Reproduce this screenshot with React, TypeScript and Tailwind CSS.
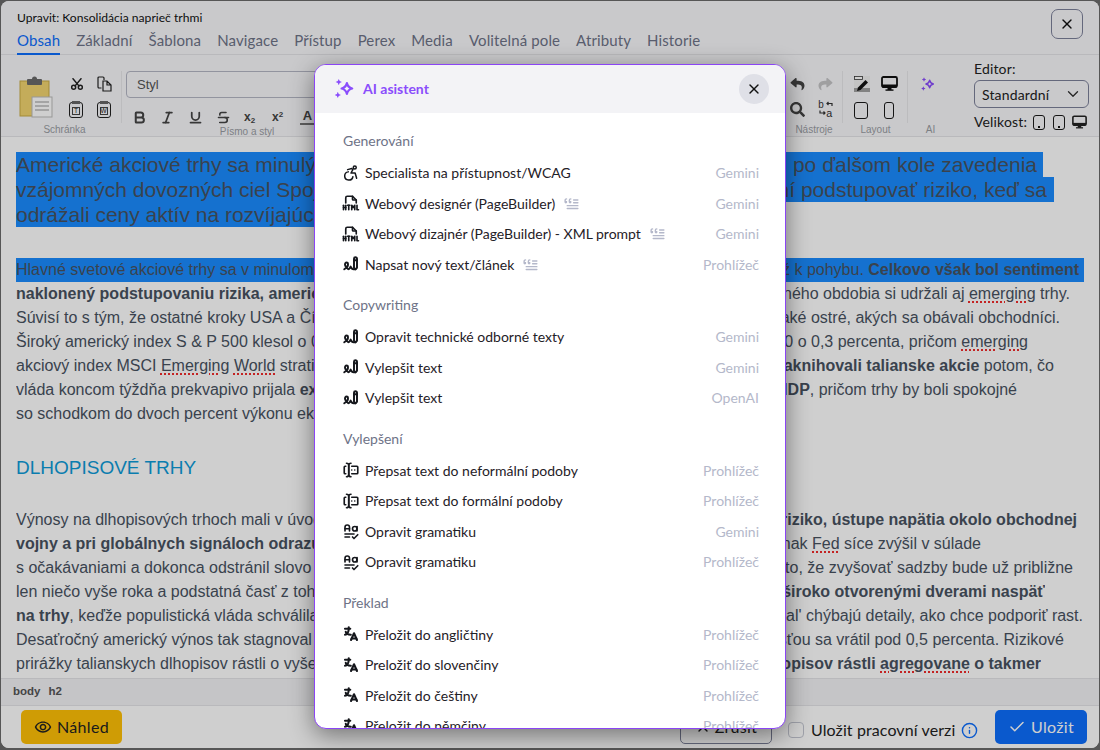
import React from "react";
import { MdOutlineRemoveRedEye } from "react-icons/md";
import { TbWritingSign, TbForms, TbTextGrammar, TbLanguage, TbBlockquote, TbFileTypeHtml, TbCut } from "react-icons/tb";
import { FaReply, FaShare, FaSearch } from "react-icons/fa";
import { Check, ChevronDown, X, Info, Bold, Italic, Underline, Strikethrough } from "lucide-react";

const Sparkles = ({ className }: { className?: string }) => (
  <svg viewBox="0 0 24 24" className={className} fill="none" stroke="currentColor">
    <path d="M14.5 6.5c.8 3.2 2 4.6 5.5 5.5-3.5.9-4.7 2.3-5.5 5.5-.8-3.2-2-4.6-5.5-5.5 3.5-.9 4.7-2.3 5.5-5.5z" strokeWidth="2.4" strokeLinejoin="round" />
    <path d="M6 2l1 2.3L9.3 5.3 7 6.3 6 8.6 5 6.3 2.7 5.3 5 4.3zM5 15.4l1 2.3 2.3 1-2.3 1L5 22l-1-2.3-2.3-1 2.3-1z" fill="currentColor" stroke="none" />
  </svg>
);

const Wheelchair = ({ className }: { className?: string }) => (
  <svg viewBox="0 0 24 24" className={className} fill="none" stroke="currentColor" strokeWidth="2" strokeLinecap="round" strokeLinejoin="round">
    <circle cx="17" cy="4.5" r="2" />
    <path d="M8.5 10.5A5.5 5.5 0 1 0 14.5 17" />
    <path d="M7.5 7.5 13 6l1.5 1.5-2.5 4.500h5.500l2 7" />
  </svg>
);

const Err = ({ children }: { children: React.ReactNode }) => (
  <span className="underline decoration-dotted decoration-[#f02c2c] decoration-[1.5px] underline-offset-2">{children}</span>
);

type Item = { icon: "a11y" | "html" | "sign" | "form" | "gram" | "lang"; label: string; src: string; quote?: boolean };

const groups: { title: string; items: Item[] }[] = [
  {
    title: "Generování",
    items: [
      { icon: "a11y", label: "Specialista na přístupnost/WCAG", src: "Gemini" },
      { icon: "html", label: "Webový designér (PageBuilder)", src: "Gemini", quote: true },
      { icon: "html", label: "Webový dizajnér (PageBuilder) - XML prompt", src: "Gemini", quote: true },
      { icon: "sign", label: "Napsat nový text/článek", src: "Prohlížeč", quote: true },
    ],
  },
  {
    title: "Copywriting",
    items: [
      { icon: "sign", label: "Opravit technické odborné texty", src: "Gemini" },
      { icon: "sign", label: "Vylepšit text", src: "Gemini" },
      { icon: "sign", label: "Vylepšit text", src: "OpenAI" },
    ],
  },
  {
    title: "Vylepšení",
    items: [
      { icon: "form", label: "Přepsat text do neformální podoby", src: "Prohlížeč" },
      { icon: "form", label: "Přepsat text do formální podoby", src: "Prohlížeč" },
      { icon: "gram", label: "Opravit gramatiku", src: "Gemini" },
      { icon: "gram", label: "Opravit gramatiku", src: "Prohlížeč" },
    ],
  },
  {
    title: "Překlad",
    items: [
      { icon: "lang", label: "Přeložit do angličtiny", src: "Prohlížeč" },
      { icon: "lang", label: "Preložiť do slovenčiny", src: "Prohlížeč" },
      { icon: "lang", label: "Přeložit do češtiny", src: "Prohlížeč" },
      { icon: "lang", label: "Přeložit do němčiny", src: "Prohlížeč" },
    ],
  },
];

const ItemIcon = ({ icon }: { icon: Item["icon"] }) => {
  const c = "w-[18px] h-[18px] text-[#15171c]";
  if (icon === "a11y") return <Wheelchair className={c} />;
  if (icon === "html") return <TbFileTypeHtml className={c} strokeWidth={2.2} />;
  if (icon === "sign") return <TbWritingSign className={c} strokeWidth={2.6} />;
  if (icon === "form") return <TbForms className={c} strokeWidth={2.2} />;
  if (icon === "gram") return <TbTextGrammar className={c} strokeWidth={2.2} />;
  return <TbLanguage className={c} strokeWidth={2.8} />;
};

const Line = ({ l, r, w }: { l: React.ReactNode; r: React.ReactNode; w: string }) => (
  <div className={"flex justify-between whitespace-nowrap h-6 leading-6 overflow-hidden " + w}>
    <span>{l}</span>
    <span>{r}</span>
  </div>
);

const tabs = ["Základní", "Šablona", "Navigace", "Přístup", "Perex", "Media", "Volitelná pole", "Atributy", "Historie"];

const PasteSmall = ({ t }: { t: string }) => (
  <span className="relative flex w-[14px] h-[16px] items-center justify-center rounded-[3px] border border-[#222]">
    <span className="absolute -top-[2px] left-[2px] w-[8px] h-[3px] bg-[#666]" />
    <span className="flex w-[8px] h-[8px] mt-[2px] items-center justify-center border border-[#444] text-[6.5px] leading-none text-[#222] font-['Liberation_Sans',sans-serif]">{t}</span>
  </span>
);

const Group = ({ w, label, border = true, labelClass = "", children }: { w: string; label: string; border?: boolean; labelClass?: string; children?: React.ReactNode }) => (
  <div className={"flex flex-col h-[81px] pt-[16px] " + w}>
    <div className={"h-[54px] " + (border ? "border-r border-[#e8e8ea]" : "")}>{children}</div>
    <div className={"h-[12px] mt-[1px] text-center text-[10px] leading-[12px] text-[#9a9da3] font-['Liberation_Sans',sans-serif] " + labelClass}>{label}</div>
  </div>
);

const MonitorIcon = ({ className }: { className?: string }) => (
  <svg viewBox="0 0 17 15" className={className}>
    <rect x="1" y="1" width="15" height="10" rx="1.500" fill="none" stroke="currentColor" strokeWidth="1.800" />
    <rect x="1" y="8.500" width="15" height="3" fill="currentColor" />
    <rect x="6.500" y="11" width="4" height="3" fill="currentColor" />
    <rect x="4.500" y="13.400" width="8" height="1.400" fill="currentColor" />
  </svg>
);

const DeviceBox = ({ size, dot = false }: { size: string; dot?: boolean }) => (
  <span className={"relative inline-block border-[1.8px] border-[#1a1a1a] rounded-[3px] " + size}>
    {dot && <span className="absolute bottom-[1px] left-1/2 -ml-[1px] w-[2px] h-[2px] bg-[#1a1a1a]" />}
  </span>
);

export default function App() {
  return (
    <div className="relative w-[1100px] h-[750px] overflow-hidden bg-[#6b6b6b] p-[1px] pb-[2px] font-['Lato',sans-serif]">
      <div className="flex flex-col h-full rounded-[8px] overflow-hidden bg-white">
        {/* header */}
        <div className="relative h-[54px] shrink-0 bg-[#f8f8fb] border-b border-[#e4e4e8] pl-4 pt-[9px]">
          <div className="text-[12.1px] leading-[16px] text-[#111]">Upravit: Konsolidácia naprieč trhmi</div>
          <div className="flex gap-4 mt-[2px] text-[15px] tracking-[0.12px] leading-[25px] text-[#6e7387]">
            <span className="relative text-[#0d6efd]">
              Obsah
              <span className="absolute left-0 right-0 bottom-[-2px] h-[2px] bg-[#0d6efd]" />
            </span>
            {tabs.map((t) => (
              <span key={t}>{t}</span>
            ))}
          </div>
          <button className="absolute right-[16px] top-[8px] flex w-[32px] h-[30px] items-center justify-center rounded-[7px] border border-[#7c8099]">
            <X className="w-[16px] h-[16px] text-[#111]" strokeWidth={2} />
          </button>
        </div>

        {/* toolbar */}
        <div className="flex h-[82px] shrink-0 bg-[#f8f8fb] border-b border-[#e4e4e8]">
          <Group w="w-[121px]" label="Schránka" labelClass="pl-[6px] text-[9.5px]">
            <div className="flex pl-[18px] pt-[5px] gap-[16px]">
              <svg viewBox="0 0 34 42" className="w-[34px] h-[42px]">
                <rect x="1" y="5" width="29" height="35" fill="#f2d46f" stroke="#c9ab45" />
                <rect x="8" y="3" width="15" height="6" rx="1" fill="#6a6a6a" />
                <circle cx="15.500" cy="3" r="2.500" fill="#6a6a6a" />
                <rect x="13" y="21" width="20" height="20" fill="#fff" stroke="#bbb" />
                <path d="M16 26h14M16 30h14M16 34h14" stroke="#b9b9b9" strokeWidth="1.400" />
              </svg>
              <div className="grid grid-cols-2 gap-x-[13px] gap-y-[10px] w-[42px] h-[42px]">
                <TbCut className="w-[16px] h-[16px] text-[#222]" strokeWidth={2.2} />
                <svg viewBox="0 0 15 16" className="w-[15px] h-[16px] text-[#222]" fill="none" stroke="currentColor" strokeWidth="1.200">
                  <path d="M4.500 12H2a1 1 0 0 1-1-1V2a1 1 0 0 1 1-1h4a1 1 0 0 1 1 1v2" />
                  <path d="M6 5h4l4 4v6H6zM10 5v4h4" />
                </svg>
                <PasteSmall t="T" />
                <PasteSmall t="W" />
              </div>
            </div>
          </Group>
          <Group w="w-[250px]" label="Písmo a styl">
            <div className="pl-[4px]">
              <div className="flex items-center w-[300px] h-[27px] rounded-[4px] border border-[#b4b7c4] pl-[10px] text-[13px] text-[#555] font-['Liberation_Sans',sans-serif]">Styl</div>
              <div className="flex items-center gap-[13px] mt-[11px] pl-[6px] text-[#444]">
                <Bold className="w-[15px] h-[15px]" strokeWidth={3.2} />
                <Italic className="w-[15px] h-[15px]" strokeWidth={2.8} />
                <Underline className="w-[15px] h-[15px]" strokeWidth={2.8} />
                <Strikethrough className="w-[15px] h-[15px]" strokeWidth={2.6} />
                <span className="w-[15px] text-[12px] font-bold leading-none font-['Liberation_Sans',sans-serif]">x<sub className="text-[8px]">2</sub></span>
                <span className="w-[15px] text-[12px] font-bold leading-none font-['Liberation_Sans',sans-serif]">x<sup className="text-[8px]">2</sup></span>
                <span className="w-[15px] border-b-2 border-[#777] text-center text-[13px] font-bold leading-[14px] font-['Liberation_Sans',sans-serif]">A</span>
              </div>
            </div>
          </Group>
          <Group w="w-[413px]" label="" />
          <Group w="w-[58px]" label="Nástroje">
            <div className="grid grid-cols-2 gap-x-[13px] gap-y-[11px] w-[42px] ml-[5px] pt-[6px]">
              <FaReply className="w-[15px] h-[14px] text-[#444]" />
              <FaShare className="w-[15px] h-[14px] text-[#c4c4c6]" />
              <FaSearch className="w-[15px] h-[15px] text-[#444]" />
              <svg viewBox="0 0 16 17" className="w-[16px] h-[17px] -mt-[2px] text-[#333]" fill="none" stroke="currentColor" strokeWidth="1.200">
                <text x="0" y="8" fontSize="10" fill="currentColor" stroke="none" fontFamily="Liberation Mono">b</text>
                <text x="8" y="16.500" fontSize="11" fill="currentColor" stroke="none" fontFamily="Liberation Mono">a</text>
                <path d="M14 6V3.500H9M10.500 2 9 3.500 10.500 5M2 10.500V13h5M5.500 11.500 7 13 5.500 14.500" />
              </svg>
            </div>
          </Group>
          <Group w="w-[65px]" label="Layout">
            <div className="grid grid-cols-[27px_17px] gap-y-[11px] pl-[11px] pt-[5px]">
              <svg viewBox="0 0 16 16" className="w-[16px] h-[16px]">
                <rect x="0" y="0" width="16" height="16" fill="#f0f0f0" />
                <rect x="0.500" y="0.500" width="8" height="3" fill="#fff" stroke="#333" strokeWidth="0.800" />
                <rect x="0" y="12" width="16" height="4" fill="#a0a0a0" />
                <path d="M3 15l1-3.500 7.500-7.500 2.500 2.500-7.500 7.500z" fill="#111" />
              </svg>
              <MonitorIcon className="w-[17px] h-[15px] text-[#111]" />
              <DeviceBox size="w-[14px] h-[17px] -mt-[1px]" />
              <DeviceBox size="w-[10px] h-[17px] -mt-[1px] ml-[3px]" />
            </div>
          </Group>
          <Group w="w-[45px]" label="AI" border={false}>
            <div className="pl-[12px] pt-[5px]">
              <Sparkles className="w-[16px] h-[16px] text-[#8a4dfc]" />
            </div>
          </Group>
          <div className="ml-[21px] mt-[6px] w-[116px] text-[14px] tracking-[0.15px] text-[#222]">
            <div className="leading-[16px]">Editor:</div>
            <div className="mt-[3px] flex items-center justify-between w-[115px] h-[28px] rounded-[6px] border border-[#7c8099] pl-[7px] pr-[6px] text-[#222]">
              Standardní
              <ChevronDown className="w-[18px] h-[18px] text-[#333]" strokeWidth={1.8} />
            </div>
            <div className="mt-[6px] flex items-center leading-[16px]">
              Velikost:
              <span className="ml-[6px] flex items-center gap-[8px]">
                <DeviceBox size="w-[12px] h-[15px]" dot />
                <DeviceBox size="w-[12px] h-[15px]" dot />
              </span>
              <MonitorIcon className="ml-[7px] w-[15px] h-[14px] text-[#222]" />
            </div>
          </div>
        </div>

        {/* content */}
        <div className="h-[541px] shrink-0 overflow-hidden bg-white pl-[15px] pt-[15px] text-[16px] text-[#48525f] font-['Liberation_Sans',sans-serif]">
          <div className="text-[21px] leading-[25px] whitespace-nowrap">
            <div className="flex justify-between w-[1027px] h-[25px] pr-[6px] bg-[#1a8cff]">
              <span>Americké akciové trhy sa minulý týždeň</span>
              <span>po ďalšom kole zavedenia</span>
            </div>
            <div className="flex justify-between w-[1038px] h-[25px] pr-[7px] bg-[#1a8cff]">
              <span>vzájomných dovozných ciel Spojených</span>
              <span>ní podstupovať riziko, keď sa</span>
            </div>
            <div className="w-[520px] h-[25px] bg-[#1a8cff]">odrážali ceny aktív na rozvíjajúcich</div>
          </div>
          <div className="mt-[31px]">
            <div className="flex justify-between whitespace-nowrap w-[1068px] h-6 leading-6 pr-[5px] bg-[#1a8cff]">
              <span>Hlavné svetové akciové trhy sa v minulom</span>
              <span>už k pohybu. <b>Celkovo však bol sentiment</b></span>
            </div>
            <Line w="w-[1054px]" l={<b>naklonený podstupovaniu rizika, americké</b>} r={<>ného obdobia si udržali aj <Err>emerging</Err> trhy.</>} />
            <Line w="w-[1044px]" l="Súvisí to s tým, že ostatné kroky USA a Číny" r="aké ostré, akých sa obávali obchodníci." />
            <Line w="w-[1012px]" l="Široký americký index S & P 500 klesol o 0,5" r={<>0 o 0,3 percenta, pričom <Err>emerging</Err></>} />
            <Line w="w-[1038px]" l={<>akciový index MSCI <Err>Emerging</Err> <Err>World</Err> stratil</>} r={<><b>zaknihovali talianske akcie</b> potom, čo</>} />
            <Line w="w-[1001px]" l={<>vláda koncom týždňa prekvapivo prijala <b>expan</b></>} r={<><b>HDP</b>, pričom trhy by boli spokojné</>} />
            <div className="h-6 leading-6 whitespace-nowrap">so schodkom do dvoch percent výkonu ekonomiky</div>
          </div>
          <div className="mt-[29px] mb-[28px] h-[25px] text-[19px] leading-[25px] text-[#0d9ad8]">DLHOPISOVÉ TRHY</div>
          <div>
            <Line w="w-[1061px]" l="Výnosy na dlhopisových trhoch mali v úvode" r={<b>riziko, ústupe napätia okolo obchodnej</b>} />
            <Line w="w-[965px]" l={<b>vojny a pri globálnych signáloch odrazu</b>} r={<>jednak <Err>Fed</Err> síce zvýšil v súlade</>} />
            <Line w="w-[1057px]" l="s očakávaniami a dokonca odstránil slovo" r="to, že zvyšovať sadzby bude už približne" />
            <Line w="w-[1029px]" l="len niečo vyše roka a podstatná časť z toho" r={<b>široko otvorenými dverami naspäť</b>} />
            <Line w="w-[1067px]" l={<><b>na trhy</b>, keďže populistická vláda schválila</>} r="ial' chýbajú detaily, ako chce podporiť rast." />
            <Line w="w-[1048px]" l="Desaťročný americký výnos tak stagnoval" r="sťou sa vrátil pod 0,5 percenta. Rizikové" />
            <Line w="w-[1025px]" l="prirážky talianskych dlhopisov rástli o vyše" r={<><b>dlhopisov rástli <Err>agregovane</Err> o takmer</b></>} />
          </div>
        </div>

        {/* breadcrumb */}
        <div className="flex h-[28px] shrink-0 items-center gap-[8px] bg-[#f3f3f6] border-y border-[#e4e4e8] pl-[12px] pb-[1px] text-[11.5px] font-bold text-[#555] font-['Liberation_Sans',sans-serif]">
          <span>body</span>
          <span>h2</span>
        </div>

        {/* footer */}
        <div className="flex flex-1 items-center bg-white pl-[20px] pr-[12px]">
          <button className="flex items-center justify-center gap-[5px] w-[101px] h-[34px] rounded-[5px] bg-[#ffc107] text-[16px] tracking-[0.3px] text-[#222]">
            <MdOutlineRemoveRedEye className="w-[18px] h-[18px]" />
            Náhled
          </button>
          <button className="ml-[558px] flex items-center justify-center gap-1 w-[92px] h-[34px] rounded-[5px] border border-[#7c8099] text-[16px] tracking-[0.3px] text-[#222]">
            <X className="w-4 h-4" />
            Zrušit
          </button>
          <span className="ml-[16px] mt-[6px] w-[16px] h-[16px] rounded-[4px] border border-[#c4c7d2] bg-white" />
          <span className="ml-[7px] mt-[6px] text-[16px] tracking-[0.1px] text-[#222]">Uložit pracovní verzi</span>
          <Info className="ml-[6px] mt-[6px] w-[17px] h-[17px] text-[#0d6efd]" strokeWidth={2} />
          <button className="ml-auto flex items-center justify-center gap-[5px] w-[92px] h-[34px] rounded-[5px] bg-[#0d6efd] text-[16px] tracking-[0.3px] text-white">
            <Check className="w-[18px] h-[18px]" strokeWidth={2} />
            Uložit
          </button>
        </div>
      </div>

      {/* overlay */}
      <div className="absolute inset-0 bg-black/[0.19]" />

      {/* modal */}
      <div className="absolute left-[314px] top-[64px] flex flex-col w-[472px] h-[665px] overflow-hidden rounded-[12px] border border-[#8b45f5] bg-white shadow-[0_6px_24px_rgba(0,0,0,0.45)]">
        <div className="flex h-[48px] shrink-0 items-center justify-between bg-[#f3f3f6] pl-[18px] pr-[16px]">
          <div className="flex items-center gap-[7px] -mt-[1px]">
            <Sparkles className="w-[23px] h-[23px] text-[#8a4dfc]" />
            <span className="text-[14px] font-bold text-[#8a4dfc]">AI asistent</span>
          </div>
          <button className="flex w-[30px] h-[30px] items-center justify-center rounded-full bg-[#dfe0e7]">
            <X className="w-[16px] h-[16px] text-[#111]" strokeWidth={2} />
          </button>
        </div>
        <div className="flex-1 overflow-hidden pl-[27px] pr-[26px] pt-[16.4px]">
          {groups.map((g) => (
            <div key={g.title} className="mb-[14px]">
              <div className="h-[28px] pl-[1px] text-[14px] leading-[24px] text-[#6e7387]">{g.title}</div>
              {g.items.map((it, i) => (
                <div key={i} className="flex h-[30.5px] items-center justify-between">
                  <div className="flex items-center gap-[5px] text-[14px] text-[#1f2127]">
                    <ItemIcon icon={it.icon} />
                    <span>{it.label}</span>
                    {it.quote && <TbBlockquote className="ml-[3px] w-[17px] h-[17px] text-[#b4b8ca]" />}
                  </div>
                  <span className="text-[14px] text-[#b4b8ca]">{it.src}</span>
                </div>
              ))}
            </div>
          ))}
        </div>
      </div>
    </div>
  );
}
